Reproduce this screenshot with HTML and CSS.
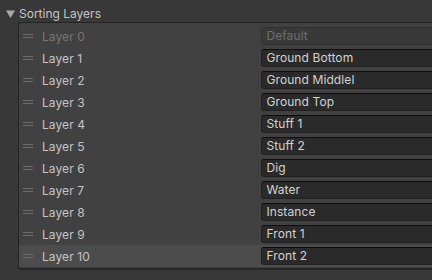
FILE: index.html
```html
<!DOCTYPE html>
<html>
<head>
<meta charset="utf-8">
<link rel="stylesheet" href="styles.css">
</head>
<body>
<div class="page">
  <div class="header">
    <svg class="tri" width="9" height="8" viewBox="0 0 9 8"><path d="M0 0.5 H9 L4.5 8 Z" fill="#a8a8a8"/></svg>
    <span class="title">Sorting Layers</span>
  </div>
  <div class="panel">
    <div class="row"><span class="handle"></span><span class="label dim">Layer 0</span><span class="field disabled">Default</span></div>
    <div class="row"><span class="handle"></span><span class="label">Layer 1</span><span class="field">Ground Bottom</span></div>
    <div class="row"><span class="handle"></span><span class="label">Layer 2</span><span class="field">Ground Middlel</span></div>
    <div class="row"><span class="handle"></span><span class="label">Layer 3</span><span class="field">Ground Top</span></div>
    <div class="row"><span class="handle"></span><span class="label">Layer 4</span><span class="field">Stuff 1</span></div>
    <div class="row"><span class="handle"></span><span class="label">Layer 5</span><span class="field">Stuff 2</span></div>
    <div class="row"><span class="handle"></span><span class="label">Layer 6</span><span class="field">Dig</span></div>
    <div class="row"><span class="handle"></span><span class="label">Layer 7</span><span class="field">Water</span></div>
    <div class="row"><span class="handle"></span><span class="label">Layer 8</span><span class="field">Instance</span></div>
    <div class="row"><span class="handle"></span><span class="label">Layer 9</span><span class="field">Front 1</span></div>
    <div class="row selected"><span class="handle"></span><span class="label">Layer 10</span><span class="field">Front 2</span></div>
  </div>
</div>
</body>
</html>
```
FILE: styles.css
```css
html, body {
  margin: 0;
  padding: 0;
  background: #383838;
  overflow: hidden;
}
.page {
  width: 432px;
  height: 280px;
  overflow: hidden;
  font-family: Inter, "Noto Sans", sans-serif;
  font-size: 12px;
  color: #c4c4c4;
}
.header {
  box-sizing: border-box;
  display: flex;
  align-items: center;
  height: 22px;
  padding: 5px 0 0 6px;
  gap: 4px;
}
.tri {
  display: block;
}
.title {
  line-height: 14px;
}
.panel {
  margin-left: 18px;
  width: 460px;
  background: #414141;
  border: 1px solid #242424;
  border-right: none;
  border-radius: 3px 0 0 3px;
  padding: 2px 0 1px 0;
  box-shadow: 0 1px 0 #2b2b2b;
}
.row {
  display: flex;
  align-items: center;
  height: 22px;
}
.row.selected {
  background: #4c4c4c;
}
.handle {
  width: 10px;
  height: 4px;
  margin-left: 4px;
  border-top: 1px solid #6c6c6c;
  border-bottom: 1px solid #6c6c6c;
  box-sizing: border-box;
}
.label {
  margin-left: 9px;
  width: 222px;
  letter-spacing: 0.1px;
}
.label.dim {
  color: #767676;
}
.field {
  box-sizing: border-box;
  height: 18px;
  width: 220px;
  line-height: 16px;
  padding-left: 4px;
  background: #2a2a2a;
  border: 1px solid #212121;
  border-top-color: #0d0d0d;
  border-radius: 3px;
  color: #d2d2d2;
  letter-spacing: 0.1px;
}
.field.disabled {
  background: #393939;
  border-color: #303030;
  color: #6e6e6e;
}
```
